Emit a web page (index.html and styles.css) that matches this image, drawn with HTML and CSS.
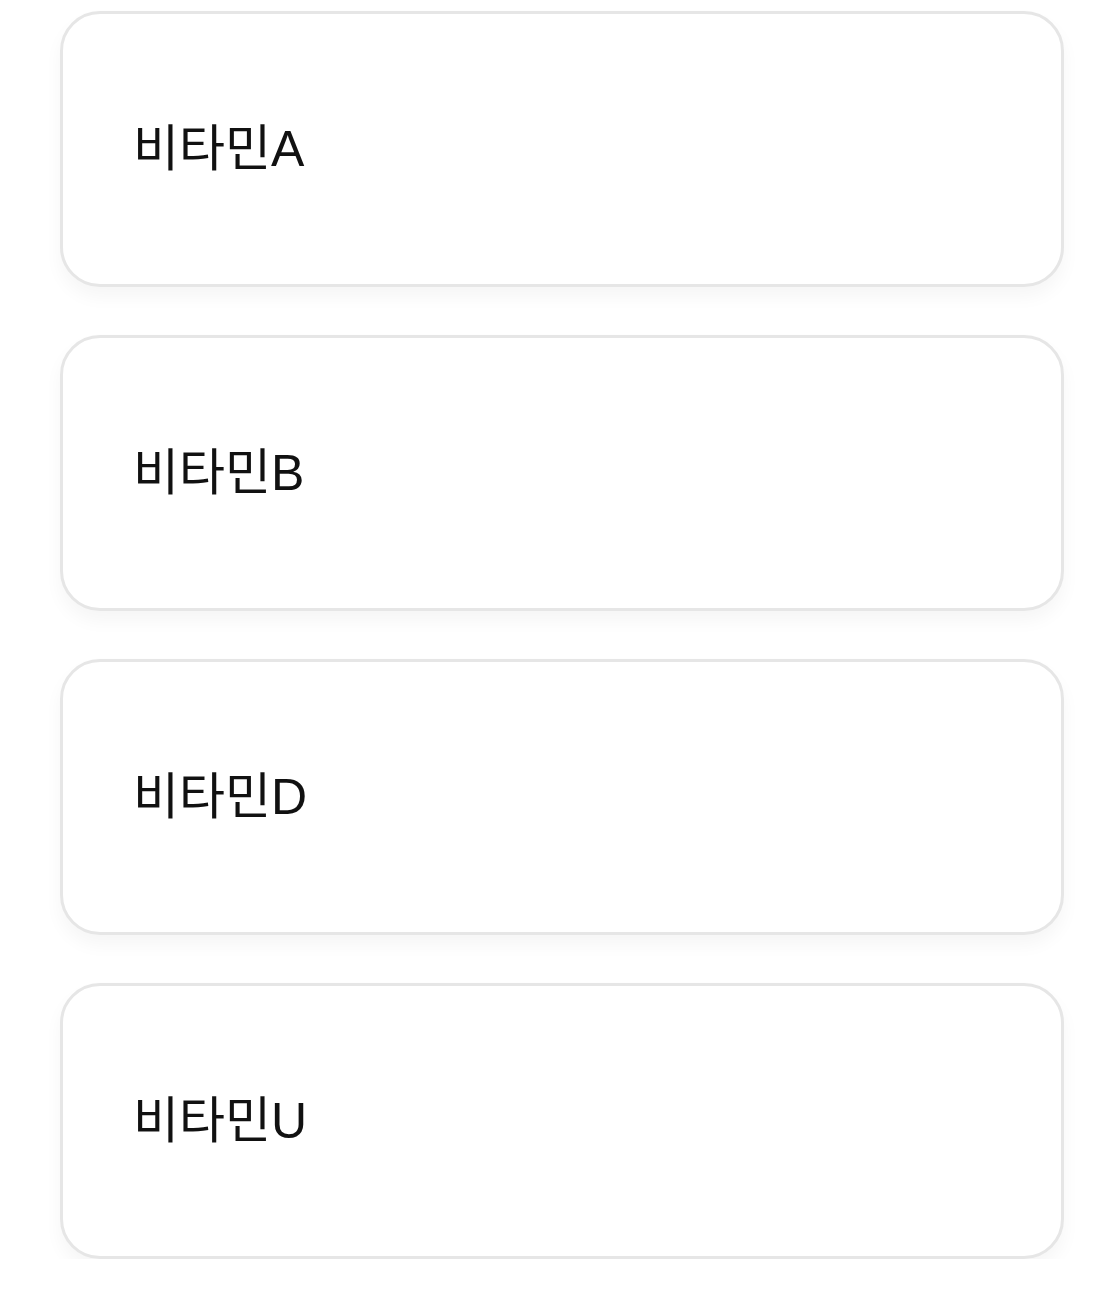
FILE: index.html
```html
<!DOCTYPE html>
<html lang="ko">
<head>
<meta charset="utf-8">
<link rel="stylesheet" href="styles.css">
</head>
<body>
<div class="list">
  <div class="card"><span class="label">비타민A</span></div>
  <div class="card"><span class="label">비타민B</span></div>
  <div class="card"><span class="label">비타민D</span></div>
  <div class="card"><span class="label">비타민U</span></div>
</div>
</body>
</html>
```
FILE: styles.css
```css
html, body {
  margin: 0;
  padding: 0;
  background: #ffffff;
}
.list {
  display: flex;
  flex-direction: column;
  gap: 48px;
  padding: 11px 0 0 60px;
  width: 1004px;
}
.card {
  box-sizing: border-box;
  height: 276px;
  border: 3px solid #e6e6e6;
  border-radius: 40px;
  background: #fff;
  box-shadow: 0 10px 18px rgba(0, 0, 0, 0.04);
  display: flex;
  align-items: center;
  padding-left: 70px;
  padding-bottom: 0;
}
.label {
  font-family: "Liberation Sans", "Noto Sans CJK KR", sans-serif;
  font-size: 50px;
  color: #111;
  line-height: 1;
}
```
